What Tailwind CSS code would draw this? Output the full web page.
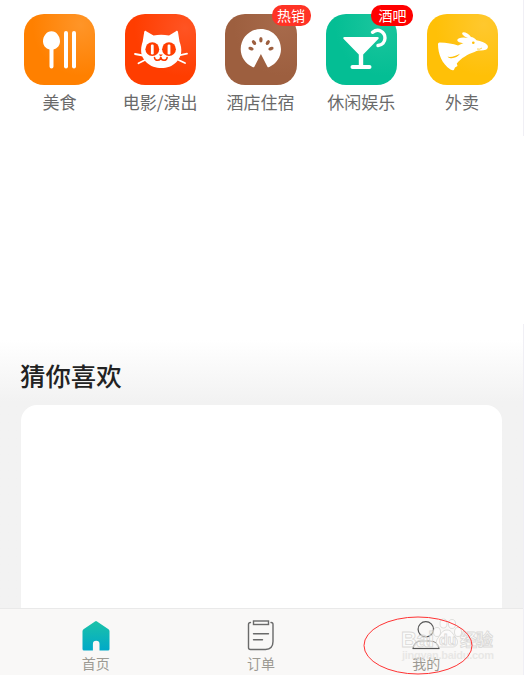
<!DOCTYPE html>
<html lang="zh-CN">
<head>
  <meta charset="UTF-8">
  <meta name="viewport" content="width=device-width, initial-scale=1.0">
  <title>首页</title>
  <script src="https://cdn.jsdelivr.net/npm/@tailwindcss/browser@4"></script>
</head>
<body class="bg-white font-['Noto_Sans_CJK_SC',sans-serif]">
  <div class="relative flex flex-col h-[675px] w-[524px] overflow-hidden">

    <!-- Categories -->
    <nav class="grid grid-cols-5 h-[340px] shrink-0 content-start pt-3.5 pl-[9px] w-[513px] text-[17px] leading-[25px] text-[#6a6a6a]">
      <a class="flex flex-col items-center">
        <svg class="ml-px w-[71px] h-[71px] rounded-[20px] bg-radial-[at_80%_15%] from-[#ff9528] to-[#ff8000] to-60%" viewBox="0 0 71 71" fill="#fff">
          <path d="M27.500 17.300c5 0 8.500 5 8.500 10 0 4.300-2.800 7.300-6.500 8.300v17a2 2 0 0 1-4 0v-17C21.800 34.600 19 31.600 19 27.300c0-5 3.500-10 8.500-10z"/>
          <rect x="40" y="17" width="4" height="37.500" rx="2"/>
          <rect x="48" y="17" width="4" height="37.500" rx="2"/>
        </svg>
        <span class="mt-1">美食</span>
      </a>
      <a class="flex flex-col items-center">
        <svg class="w-[71px] h-[71px] rounded-[20px] bg-radial-[at_85%_20%] from-[#ff5423] to-[#ff3d00] to-60%" viewBox="0 0 71 71">
          <path fill="#fff" d="M19.200 18c.3-1.200 1-1.500 2-.8l7.300 4.300q7.500-1.500 15.500 0l7-4.300c1-.7 1.800-.4 2 .8l1.500 9.500c3 8 2.500 15-3 20.500C47 52.500 42 54 36.500 54S25.500 52.500 21 48c-5.500-5.500-6-12.500-3.300-20.500z"/>
          <path stroke="#fff" stroke-width="1.800" stroke-linecap="round" d="M10 40l8 1.500M13.500 49.300l6-3M62 39.700L54 41.300M60 49l-6.500-3"/>
          <circle cx="27.300" cy="35.200" r="6.900" fill="#ff3d00"/>
          <circle cx="44" cy="35.200" r="6.900" fill="#ff3d00"/>
          <rect x="25.900" y="30.500" width="2.800" height="10" rx="1.200" fill="#fff"/>
          <rect x="42.600" y="30.500" width="2.800" height="10" rx="1.200" fill="#fff"/>
          <path fill="#ff3d00" d="M33.800 40.500h4l-2 2.300z"/>
          <path fill="none" stroke="#ff3d00" stroke-width="1.600" stroke-linecap="round" d="M29.500 43.500c0 3.800 6.300 3.800 6.300-.5 0 4.300 6.300 4.300 6.300.5"/>
        </svg>
        <span class="mt-1">电影/演出</span>
      </a>
      <a class="relative flex flex-col items-center">
        <svg class="w-[72px] h-[71px] rounded-[20px] bg-radial-[at_80%_15%] from-[#a76a4b] to-[#9d5f3f] to-60%" viewBox="0 0 72 71">
          <path fill="#fff" d="M27.500 53C20.500 49.800 15.700 43 15.700 35.300 15.700 24 24.500 15 35.900 15S56 24 56 35.300c0 7.700-4.700 14.500-11.700 17.700-1 .5-1.600.3-2-.6L35.900 40l-6.400 12.400c-.5.900-1 1.100-2 .6z"/>
          <g fill="#9d5f3f">
            <ellipse cx="35.900" cy="25.800" rx="1.700" ry="2.700"/>
            <ellipse cx="29" cy="28.600" rx="1.700" ry="2.700" transform="rotate(-35 29 28.600)"/>
            <ellipse cx="42.800" cy="28.600" rx="1.700" ry="2.700" transform="rotate(35 42.800 28.600)"/>
            <ellipse cx="26" cy="34.700" rx="1.700" ry="2.700" transform="rotate(-72 26 34.700)"/>
            <ellipse cx="46" cy="34.700" rx="1.700" ry="2.700" transform="rotate(72 46 34.700)"/>
          </g>
        </svg>
        <span class="absolute -top-[9px] left-[61px] flex h-[21px] w-[39px] items-center justify-center rounded-[10px] bg-[#ff3325] pb-px text-sm text-white">热销</span>
        <span class="mt-1 -ml-px">酒店住宿</span>
      </a>
      <a class="relative flex flex-col items-center">
        <svg class="w-[71px] h-[71px] rounded-[20px] bg-radial-[at_80%_15%] from-[#1cc69e] to-[#04be94] to-60%" viewBox="0 0 71 71" fill="none" stroke="#fff" stroke-linecap="round">
          <path fill="#fff" stroke="none" d="M18.500 23h33c1.300 0 1.700 1.200.8 2L37.200 40.500V52h-4.400V40.500L17.700 25c-.9-.8-.5-2 .8-2z"/>
          <path stroke-width="4" d="M26.500 53h17"/>
          <path stroke-width="3.400" d="M46.500 18.300c6-4.600 12.500-.3 12.500 5.700 0 4-2.700 7-7 7.500"/>
        </svg>
        <span class="absolute -top-[9px] left-[60px] flex h-[21px] w-[42px] items-center justify-center rounded-[10px] bg-[#ff0000] pb-px text-sm text-white">酒吧</span>
        <span class="mt-1 -ml-px">休闲娱乐</span>
      </a>
      <a class="flex flex-col items-center">
        <svg class="w-[71px] h-[71px] rounded-[20px] bg-radial-[at_80%_15%] from-[#ffc82e] to-[#ffc007] to-60%" viewBox="0 0 71 71">
          <path fill="#fff" d="M11 30Q11 28.500 12.500 28.500C20 28.700 26 29.800 31 31.500L36.500 29C33.500 28.600 30.200 28 30.300 25.900C30.500 23.700 36 22.800 41 24C38 23 34.800 20.800 35.200 19C36.200 17 41.500 19.500 44 23C46 23 48 24.300 49.500 26.200C54 27 58 28.500 60.300 31C62 33.500 60 36 56.500 36.300C53 36.700 50 36.300 47.500 38C40 40.500 34.500 44 29.800 49.500L30.500 52L28 53.500L27 55.700C26 56.600 25 56.300 23.500 55.500C15 50 11 40 11 30Z"/>
          <path fill="#ffc007" d="M20.500 42.800c5 .5 8-.8 12.500-3-2.500 3.500-8.500 6.300-12.500 3z"/>
          <circle cx="46.300" cy="28.700" r="1.300" fill="#ffc007"/>
          <path fill="none" stroke="#ffc007" stroke-width=".7" d="M50 35q3 .8 5-1"/>
        </svg>
        <span class="mt-1 -ml-px">外卖</span>
      </a>
    </nav>

    <!-- Recommendations -->
    <section class="grow min-h-0 flex flex-col bg-linear-to-b from-white to-[#f2f2f2] to-[62px] pl-[21px] pr-[22px]">
      <h2 class="-ml-px pt-4 h-[65px] shrink-0 text-[25.4px] leading-[38px] font-medium text-[#222]">猜你喜欢</h2>
      <div class="grow rounded-t-2xl bg-white"></div>
    </section>

    <!-- Tab bar -->
    <footer class="grid grid-cols-3 h-[66px] shrink-0 w-[496px] pl-[13px] box-content border-t border-[#e9e9e9] bg-[#f9f8f7] pr-[15px] text-sm leading-5 text-[#9c9a93]">
      <a class="flex flex-col items-center pt-3">
        <svg class="w-7 h-[30px]" viewBox="0 0 28 30">
          <defs>
            <linearGradient id="home" x1="0" y1="0" x2="0" y2="1">
              <stop offset="0" stop-color="#1cc2a8"/>
              <stop offset="1" stop-color="#00a9c8"/>
            </linearGradient>
          </defs>
          <path fill="url(#home)" d="M15 .4l11.500 7.800q1 .8 1 2V28q0 1.500-1.500 1.500h-8.500v-6.500a3.300 3.300 0 0 0-6.600 0v6.500H2Q.5 29.500.5 28V10.200q0-1.200 1-2L13 .4q1-.6 2 0z"/>
        </svg>
        <span class="mt-0.5">首页</span>
      </a>
      <a class="flex flex-col items-center pt-[11px]">
        <svg class="w-7 h-[31px]" viewBox="0 0 28 31" fill="none" stroke="#6a6a6a" stroke-width="1.400" stroke-linecap="round">
          <path d="M3.500 2.500Q1.500 2.500 1.500 4.500v23q0 2 2 2h15q7.500-.5 7.500-8v-17q0-2-2-2"/>
          <rect x="6.500" y="1" width="15" height="3.500"/>
          <path d="M6.500 13.700h15M6.500 19.700h9"/>
        </svg>
        <span class="mt-0.5">订单</span>
      </a>
      <a class="flex flex-col items-center pt-[11px]">
        <svg class="w-7 h-[31px]" viewBox="0 0 28 31" fill="none" stroke="#555" stroke-width="1.200">
          <circle cx="13.800" cy="9.300" r="7.700"/>
          <path stroke-linejoin="round" stroke="#8a8a88" d="M.9 28.500c.6-5 4.500-7.500 9-7.500h8c4.500 0 8.500 2.500 9.200 7.500"/>
          <path d="M.6 28.500h26.800"/>
        </svg>
        <span class="mt-0.5">我的</span>
      </a>
    </footer>

    <!-- Right edge line, broken beside the empty area -->
    <div class="absolute right-0 top-0 h-[136px] w-px bg-[#f0eff5]"></div>
    <div class="absolute right-0 bottom-0 h-[351px] w-px bg-[#f0eff5]"></div>

    <!-- Watermark and highlight ring over the last tab -->
    <svg class="absolute left-[360px] top-[610px]" width="164" height="65" viewBox="0 0 164 65">
      <g fill="#fff" fill-opacity=".45" stroke="#d3d2d0" stroke-opacity=".8" stroke-width=".9">
        <ellipse cx="77" cy="22" rx="3.500" ry="4.500"/>
        <ellipse cx="83.500" cy="13.500" rx="3.500" ry="4.500"/>
        <ellipse cx="92" cy="14" rx="3.500" ry="4.500"/>
        <ellipse cx="98" cy="22" rx="3.500" ry="4.500"/>
        <path d="M87 20c5 0 6 5 9 8 3 4 1 9-3 9H80c-4 0-5-5-2-9s4-8 9-8z"/>
        <g font-family="Liberation Sans, sans-serif" font-weight="bold">
          <text x="41" y="37" font-size="22" textLength="33">Bai</text>
          <text x="79" y="35" font-size="14">du</text>
          <text x="42" y="49" font-size="11" textLength="92" fill="#e3e2e0" stroke="none" fill-opacity=".75">jingyan.baidu.com</text>
        </g>
        <text x="100" y="36" font-size="17" font-weight="bold" font-family="Noto Sans CJK SC, sans-serif" textLength="33">经验</text>
      </g>
      <ellipse cx="58" cy="35.500" rx="54" ry="28.500" fill="none" stroke="#f33" stroke-width="1"/>
    </svg>
  </div>
</body>
</html>
